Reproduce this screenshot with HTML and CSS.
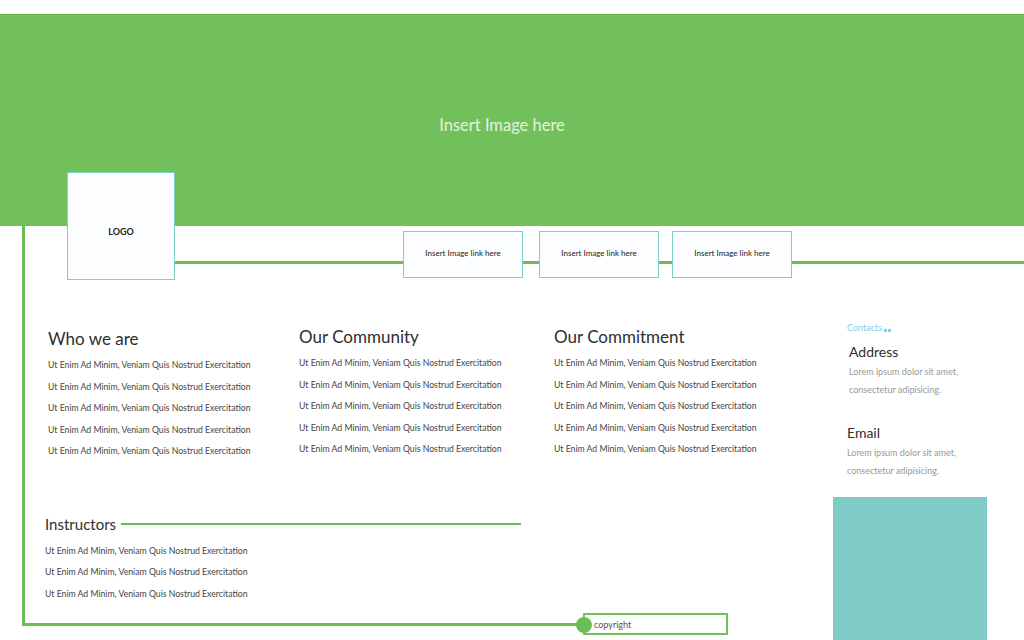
FILE: index.html
```html
<!DOCTYPE html>
<html>
<head>
<meta charset="utf-8">
<title>Page</title>
<link rel="stylesheet" href="styles.css">
</head>
<body>
<header class="hero">
  <span class="hero-text">Insert Image here</span>
</header>
<div class="frame">
  <div class="frame-line"></div>
  <nav class="nav">
    <div class="nav-line"></div>
    <div class="logo">LOGO</div>
    <div class="links">
      <a class="link-box">Insert Image link here</a>
      <a class="link-box link-second">Insert Image link here</a>
      <a class="link-box link-third">Insert Image link here</a>
    </div>
  </nav>
  <main class="main">
    <div class="left">
      <section class="cols">
        <div class="col col-first">
          <h2 class="col-title">Who we are</h2>
          <p class="item">Ut Enim Ad Minim, Veniam Quis Nostrud Exercitation</p>
          <p class="item">Ut Enim Ad Minim, Veniam Quis Nostrud Exercitation</p>
          <p class="item">Ut Enim Ad Minim, Veniam Quis Nostrud Exercitation</p>
          <p class="item">Ut Enim Ad Minim, Veniam Quis Nostrud Exercitation</p>
          <p class="item">Ut Enim Ad Minim, Veniam Quis Nostrud Exercitation</p>
        </div>
        <div class="col">
          <h2 class="col-title">Our Community</h2>
          <p class="item">Ut Enim Ad Minim, Veniam Quis Nostrud Exercitation</p>
          <p class="item">Ut Enim Ad Minim, Veniam Quis Nostrud Exercitation</p>
          <p class="item">Ut Enim Ad Minim, Veniam Quis Nostrud Exercitation</p>
          <p class="item">Ut Enim Ad Minim, Veniam Quis Nostrud Exercitation</p>
          <p class="item">Ut Enim Ad Minim, Veniam Quis Nostrud Exercitation</p>
        </div>
        <div class="col">
          <h2 class="col-title">Our Commitment</h2>
          <p class="item">Ut Enim Ad Minim, Veniam Quis Nostrud Exercitation</p>
          <p class="item">Ut Enim Ad Minim, Veniam Quis Nostrud Exercitation</p>
          <p class="item">Ut Enim Ad Minim, Veniam Quis Nostrud Exercitation</p>
          <p class="item">Ut Enim Ad Minim, Veniam Quis Nostrud Exercitation</p>
          <p class="item">Ut Enim Ad Minim, Veniam Quis Nostrud Exercitation</p>
        </div>
      </section>
      <section class="instructors">
        <div class="inst-head">
          <h2 class="inst-title">Instructors</h2>
          <span class="inst-line"></span>
        </div>
        <p class="item">Ut Enim Ad Minim, Veniam Quis Nostrud Exercitation</p>
        <p class="item">Ut Enim Ad Minim, Veniam Quis Nostrud Exercitation</p>
        <p class="item">Ut Enim Ad Minim, Veniam Quis Nostrud Exercitation</p>
      </section>
      <footer class="copyright">
        <span class="dot"></span>
        <span class="copy-text">copyright</span>
      </footer>
    </div>
    <aside class="contacts">
      <div class="contacts-label">Contacts<span class="sq"></span><span class="sq"></span></div>
      <div class="contact contact-address">
        <h3 class="contact-title">Address</h3>
        <p class="contact-text">Lorem ipsum dolor sit amet,<br>consectetur adipisicing.</p>
      </div>
      <div class="contact contact-email">
        <h3 class="contact-title">Email</h3>
        <p class="contact-text">Lorem ipsum dolor sit amet,<br>consectetur adipisicing.</p>
      </div>
      <div class="teal-block"></div>
    </aside>
  </main>
</div>
</body>
</html>
```
FILE: styles.css
```css
* { box-sizing: border-box; }
html, body { margin: 0; padding: 0; }
body {
  width: 1024px;
  height: 640px;
  overflow: hidden;
  background: #fff;
  font-family: Lato, "Open Sans", sans-serif;
  color: #333;
}

.hero {
  margin-top: 14px;
  height: 212px;
  background: #72c05c;
  border-top: 1px solid #62b34c;
  display: flex;
  align-items: center;
  justify-content: center;
  padding-top: 8px;
  padding-right: 20px;
}
.hero-text {
  color: #e4f3de;
  font-size: 16.5px;
  font-weight: 400;
}

.frame {
  position: relative;
  height: 414px;
}
.frame-line {
  position: absolute;
  left: 22px;
  top: 0;
  width: 562px;
  height: 400px;
  border-left: 3px solid #6cbd55;
  border-bottom: 3px solid #6cbd55;
}

.nav {
  position: relative;
  height: 54px;
  display: flex;
  align-items: flex-start;
  padding-left: 67px;
}
.nav-line {
  position: absolute;
  left: 175px;
  right: 0;
  top: 35px;
  height: 3px;
  background: #6cbd55;
}
.logo {
  position: relative;
  margin-top: -54px;
  width: 108px;
  height: 108px;
  background: #fcfdfe;
  border: 1.5px solid #7dcfca;
  display: flex;
  align-items: center;
  justify-content: center;
  padding-top: 10px;
  font-size: 9px;
  font-weight: 700;
  color: #222;
}
.links {
  display: flex;
  margin-left: 228px;
  margin-top: 5px;
}
.link-box {
  position: relative;
  width: 120px;
  height: 47px;
  background: #fcfdfe;
  border: 1.5px solid #7dcfca;
  display: flex;
  align-items: center;
  justify-content: center;
  padding-bottom: 3px;
  font-size: 8px;
  color: #222;
}
.link-second { margin-left: 16px; }
.link-third { margin-left: 13px; }

.main {
  display: grid;
  grid-template-columns: 833px 1fr;
  margin-top: 42px;
}

.cols {
  display: grid;
  grid-template-columns: 251px 255px 1fr;
  padding-left: 48px;
  margin-top: 5px;
}
.col-first { padding-top: 2px; }
.col-title {
  margin: 0 0 4px;
  font-size: 17px;
  line-height: 20px;
  font-weight: 400;
  color: #2e2e2e;
}
.item {
  margin: 0;
  font-size: 8.7px;
  line-height: 21.5px;
  color: #444;
  white-space: nowrap;
}
.cols .item { position: relative; top: 1px; }

.instructors {
  padding-left: 45px;
  margin-top: 54px;
}
.inst-head {
  display: flex;
  align-items: center;
  gap: 5px;
  margin-bottom: 7px;
}
.inst-title {
  margin: 0;
  font-size: 15px;
  line-height: 18px;
  font-weight: 400;
  color: #2e2e2e;
}
.inst-line {
  width: 400px;
  height: 2px;
  background: #6cbd55;
  margin-top: 1px;
}

.copyright {
  position: relative;
  margin-top: 9px;
  margin-left: 583px;
  width: 145px;
  height: 22px;
  border: 2px solid #72c05c;
  display: flex;
  align-items: center;
  padding-left: 9px;
}
.dot {
  position: absolute;
  left: -9px;
  top: 2px;
  width: 16px;
  height: 16px;
  border-radius: 50%;
  background: #6cbd55;
}
.copy-text {
  font-size: 9px;
  color: #555;
}

.contacts {
  display: flex;
  flex-direction: column;
}
.contacts-label {
  padding-left: 14px;
  font-size: 9px;
  line-height: 12px;
  color: #84cdf0;
  display: flex;
  align-items: flex-end;
}
.sq {
  width: 3px;
  height: 3px;
  background: #84cdf0;
  margin-left: 1px;
  margin-bottom: 2px;
}
.sq:first-of-type { margin-left: 2px; }
.contact { padding-left: 14px; }
.contact-address { margin-top: 9px; padding-left: 16px; }
.contact-email { margin-top: 25px; }
.contact-title {
  margin: 0 0 2px;
  font-size: 14px;
  line-height: 18px;
  font-weight: 400;
  color: #2e2e2e;
}
.contact-text {
  margin: 0;
  font-size: 9px;
  line-height: 18px;
  color: #999;
}
.teal-block {
  margin-top: 17px;
  width: 154px;
  flex: 1;
  min-height: 144px;
  background: #7eccc5;
}
```
